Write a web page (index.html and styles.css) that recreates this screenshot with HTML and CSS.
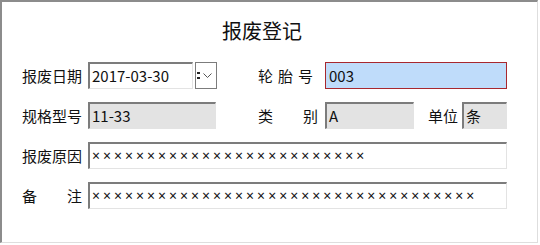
FILE: index.html
```html
<!DOCTYPE html>
<html lang="zh-CN">
<head>
  <meta charset="UTF-8">
  <title>报废登记</title>
  <link rel="stylesheet" href="styles.css">
</head>
<body>

  <!-- Scrap registration form -->
  <div class="frame">
    <h1 class="title">报废登记</h1>

    <div class="row">
      <span class="label">报废日期</span>
      <div class="field date">2017-03-30</div>
      <div class="drop">
        <span class="caret-dot"></span>
        <svg width="9" height="6" viewBox="0 0 9 6"><polyline points="0.5,0.5 4.5,4.5 8.5,0.5" fill="none" stroke="#555" stroke-width="1"/></svg>
      </div>
      <span class="label spaced tyre">轮胎号</span>
      <div class="field focus tyre-no">003</div>
    </div>

    <div class="row">
      <span class="label">规格型号</span>
      <div class="field disabled spec">11-33</div>
      <span class="label split kind"><span>类</span><span>别</span></span>
      <div class="field disabled kind-val">A</div>
      <span class="label unit">单位</span>
      <div class="field disabled unit-val">条</div>
    </div>

    <div class="row">
      <span class="label">报废原因</span>
      <div class="field wide xs">×××××××××××××××××××××××××</div>
    </div>

    <div class="row">
      <span class="label split"><span>备</span><span>注</span></span>
      <div class="field wide xs">×××××××××××××××××××××××××××××××××××</div>
    </div>
  </div>

</body>
</html>
```

FILE: styles.css
```css
body {
  margin: 0;
  background: #fff;
  font-family: "Noto Sans CJK SC", "Noto Sans", sans-serif;
  color: #111;
}

.frame {
  box-sizing: border-box;
  width: 538px;
  height: 243px;
  border-top: 2px solid #8c8c8c;
  border-left: 2px solid #8c8c8c;
  border-right: 1px solid #dedede;
  border-bottom: 1px solid #dedede;
  padding: 0 0 0 20px;
}

.title {
  margin: 0;
  padding-top: 15px;
  padding-right: 35px;
  height: 60px;
  box-sizing: border-box;
  font-size: 20px;
  line-height: 27px;
  font-weight: normal;
  text-align: center;
}

.row {
  display: flex;
  align-items: center;
  height: 27px;
  margin-bottom: 13px;
}

.label {
  width: 60px;
  font-size: 15px;
  line-height: 20px;
  white-space: nowrap;
  flex-shrink: 0;
}

.split {
  display: flex;
  justify-content: space-between;
}

.field {
  box-sizing: border-box;
  height: 27px;
  margin-left: 6px;
  padding-left: 2px;
  font-size: 15px;
  line-height: 24px;
  border-top: 2px solid #7c7c7c;
  border-left: 2px solid #7c7c7c;
  border-right: 1px solid #e3e3e3;
  border-bottom: 1px solid #e3e3e3;
  background: #fff;
  white-space: nowrap;
  overflow: hidden;
}

.date {
  width: 105px;
}

.drop {
  box-sizing: border-box;
  width: 22px;
  height: 27px;
  margin-left: 2px;
  border: 1px solid #7c7c7c;
  display: flex;
  align-items: center;
  padding-left: 1px;
  gap: 5px;
}

.caret-dot {
  width: 1px;
  height: 7px;
  border-top: 2px dotted #222;
  border-bottom: 2px dotted #222;
  box-sizing: border-box;
}

.tyre {
  margin-left: 41px;
  width: 61px;
}

.spaced {
  letter-spacing: 5px;
}

.focus {
  width: 182px;
  border: 1px solid #a8282e;
  background: #bfdcfa;
  padding-left: 3px;
  line-height: 25px;
}

.disabled {
  background: #e3e3e3;
}

.spec {
  width: 128px;
}

.kind {
  margin-left: 42px;
}

.kind-val {
  width: 89px;
  margin-left: 7px;
}

.unit {
  width: 32px;
  margin-left: 14px;
}

.unit-val {
  width: 45px;
  margin-left: 2px;
}

.wide {
  width: 419px;
}

.xs {
  font-family: "Noto Sans", sans-serif;
  font-size: 14px;
  letter-spacing: 3px;
}
```
